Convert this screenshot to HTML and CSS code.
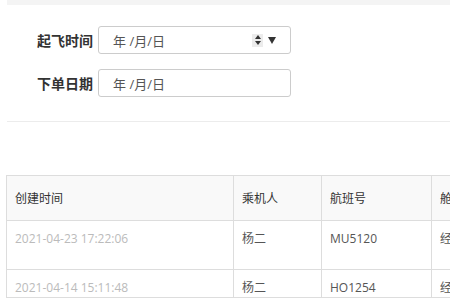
FILE: index.html
```html
<!DOCTYPE html>
<html lang="zh-CN">
<head>
<meta charset="utf-8">
<title>订单查询</title>
<link rel="stylesheet" href="styles.css">
</head>
<body>
<div class="topbar"></div>
<form class="filters">
  <div class="field-row">
    <label class="field-label">起飞时间</label>
    <div class="date-field">
      <span class="date-text">年 /月/日</span>
      <span class="picker">
        <span class="spin"><i class="up"></i><i class="down"></i></span>
        <i class="caret"></i>
      </span>
    </div>
  </div>
  <div class="field-row">
    <label class="field-label">下单日期</label>
    <div class="date-field">
      <span class="date-text">年 /月/日</span>
    </div>
  </div>
</form>
<div class="divider"></div>
<div class="table-wrap">
<table class="orders">
  <colgroup>
    <col class="c-time"><col class="c-name"><col class="c-flight"><col class="c-cabin">
  </colgroup>
  <thead>
    <tr><th>创建时间</th><th>乘机人</th><th>航班号</th><th>舱位</th></tr>
  </thead>
  <tbody>
    <tr class="r1"><td class="muted">2021-04-23 17:22:06</td><td>杨二</td><td>MU5120</td><td>经济舱</td></tr>
    <tr><td class="muted">2021-04-14 15:11:48</td><td>杨二</td><td>HO1254</td><td>经济舱</td></tr>
  </tbody>
</table>
</div>
</body>
</html>
```
FILE: styles.css
```css
html, body {
  margin: 0;
  padding: 0;
  background: #fff;
  overflow: hidden;
}
body {
  font-family: "Open Sans", "Noto Sans CJK SC", sans-serif;
  font-size: 13px;
  color: #555;
}
.topbar {
  height: 5px;
  margin-left: 7px;
  background: #f4f4f4;
}
.filters {
  padding: 21px 0 0 7px;
  display: flex;
  flex-direction: column;
  gap: 15px;
}
.field-row {
  display: flex;
  align-items: center;
  gap: 5px;
}
.field-label {
  width: 86px;
  text-align: right;
  font-size: 14px;
  font-weight: bold;
  color: #333;
}
.date-field {
  box-sizing: border-box;
  width: 193px;
  height: 28px;
  border: 1px solid #ccc;
  border-radius: 3px;
  display: flex;
  align-items: center;
  padding: 0 14px 0 14px;
}
.date-text {
  flex: 1;
  color: #555;
  font-size: 13px;
}
.picker {
  display: flex;
  align-items: center;
  gap: 5px;
}
.spin {
  width: 11px;
  height: 13px;
  background: #ececec;
  display: flex;
  flex-direction: column;
  align-items: center;
  justify-content: center;
  gap: 2px;
}
.spin i {
  width: 0;
  height: 0;
  border-left: 3.5px solid transparent;
  border-right: 3.5px solid transparent;
}
.spin .up { border-bottom: 4px solid #333; }
.spin .down { border-top: 4px solid #333; }
.caret {
  width: 0;
  height: 0;
  border-left: 4px solid transparent;
  border-right: 4px solid transparent;
  border-top: 7px solid #333;
}
.divider {
  margin: 24px 0 0 7px;
  height: 1px;
  background: #ececec;
}
.table-wrap {
  padding: 53px 0 0 6px;
}
.orders {
  border-collapse: collapse;
  table-layout: fixed;
  width: 560px;
}
.c-time { width: 227px; }
.c-name { width: 88px; }
.c-flight { width: 110px; }
.c-cabin { width: 135px; }
.orders th,
.orders td {
  border: 1px solid #ddd;
  padding: 0 8px;
  text-align: left;
  white-space: nowrap;
  overflow: hidden;
}
.orders th {
  height: 44px;
  background: #f9f9f9;
  font-weight: normal;
  color: #333;
  font-size: 12px;
}
.orders td {
  vertical-align: top;
  padding-top: 9px;
  color: #555;
  font-size: 12px;
  line-height: 18px;
}
.orders .r1 td {
  height: 39px;
}
.orders td.muted {
  color: #bbb;
}
```
